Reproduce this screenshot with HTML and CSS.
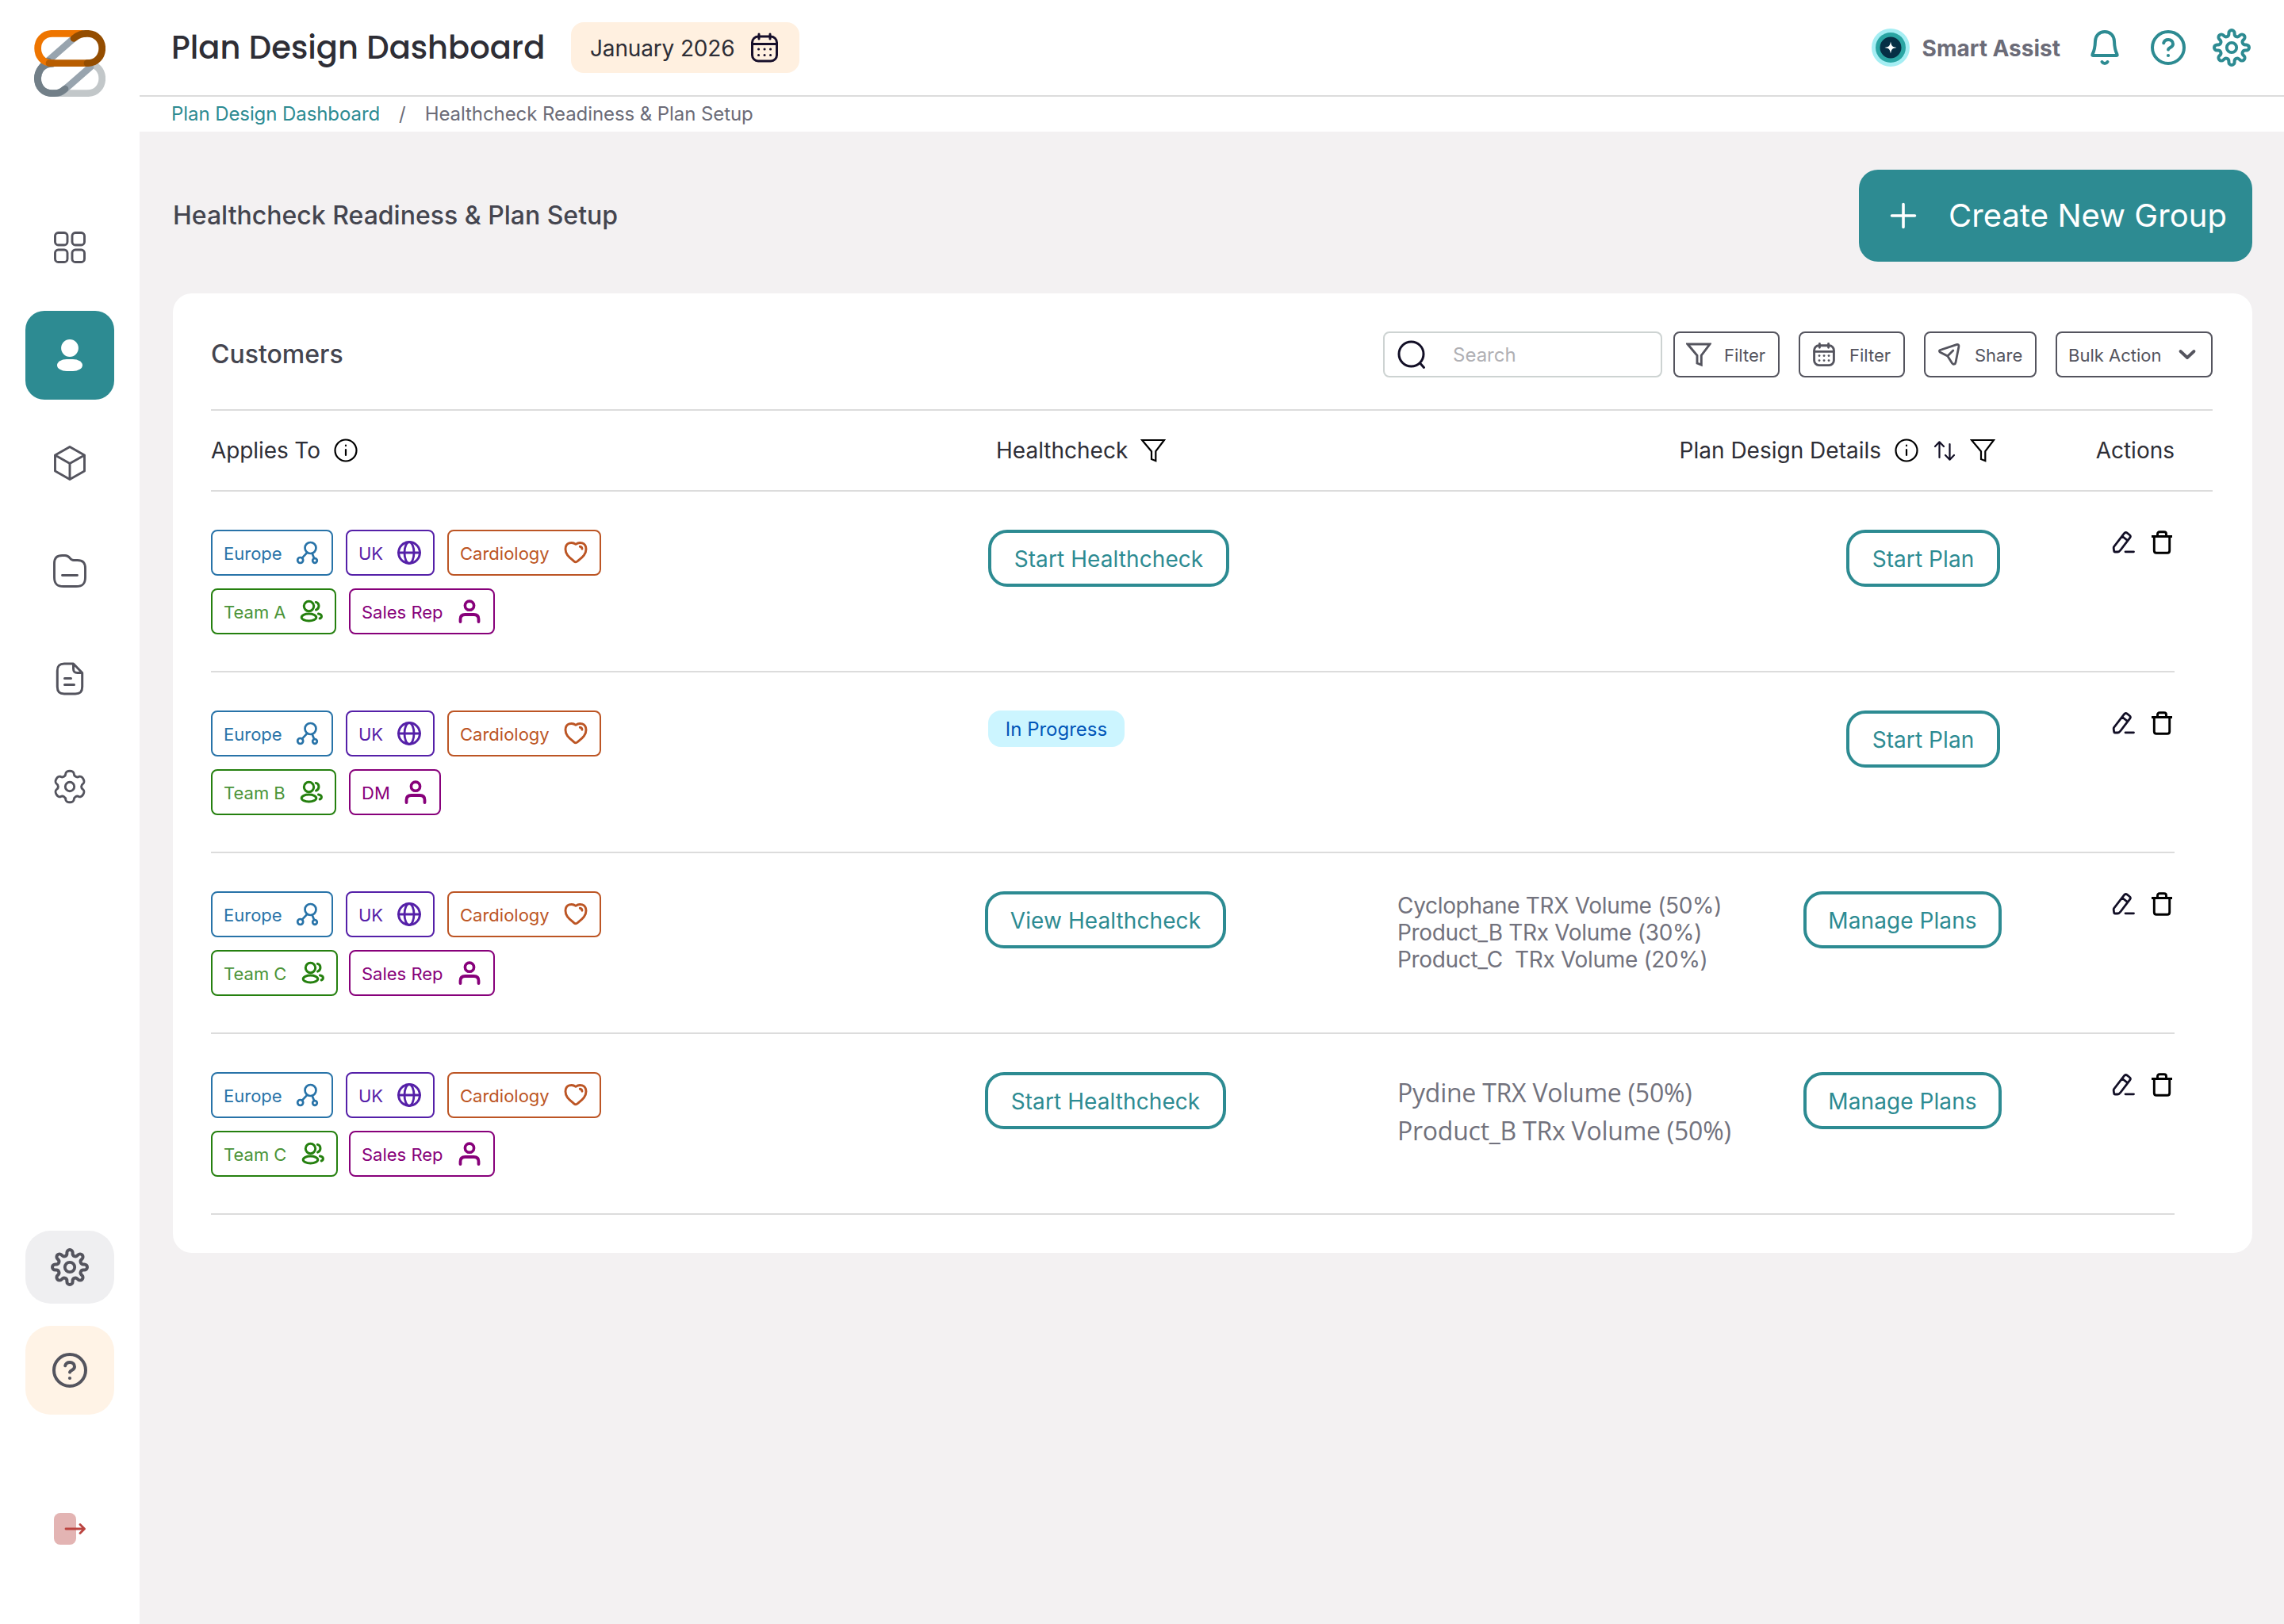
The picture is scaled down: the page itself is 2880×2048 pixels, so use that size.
FILE: index.html
```html
<!DOCTYPE html>
<html lang="en">
<head>
<meta charset="utf-8">
<title>Plan Design Dashboard</title>
<link rel="stylesheet" href="styles.css">
</head>
<body>
<svg class="sprite" aria-hidden="true">
  <symbol id="gear" viewBox="-24 -24 48 48"><path d="M-3.6-17V-18.4A3.6 3.6 0 0 1 3.6-18.4V-17A3.44 3.44 0 0 0 9.48-14.57L10.47-15.56A3.6 3.6 0 0 1 15.56-10.47L14.57-9.48A3.44 3.44 0 0 0 17-3.6H18.4A3.6 3.6 0 0 1 18.4 3.6H17A3.44 3.44 0 0 0 14.57 9.48L15.56 10.47A3.6 3.6 0 0 1 10.47 15.56L9.48 14.57A3.44 3.44 0 0 0 3.6 17V18.4A3.6 3.6 0 0 1-3.6 18.4V17A3.44 3.44 0 0 0-9.48 14.57L-10.47 15.56A3.6 3.6 0 0 1-15.56 10.47L-14.57 9.48A3.44 3.44 0 0 0-17 3.6H-18.4A3.6 3.6 0 0 1-18.4-3.6H-17A3.44 3.44 0 0 0-14.57-9.48L-15.56-10.47A3.6 3.6 0 0 1-10.47-15.56L-9.48-14.57A3.44 3.44 0 0 0-3.6-17Z" stroke-width="4"/><circle r="6.2" stroke-width="3.8"/></symbol>
  <symbol id="help" viewBox="0 0 48 48"><circle cx="24" cy="24" r="20" stroke-width="4"/><path d="M18.2 18.2c.8-3 3.200-4.300 5.900-4.300 3.400 0 5.900 2.300 5.900 5.500 0 4.600-5.300 4.400-6 7.100" stroke-width="4"/><circle cx="24" cy="34" r="2.100" fill="currentColor" stroke="none"/></symbol>
  <symbol id="bell" viewBox="0 0 48 48"><path d="M24 4c7 0 11.800 5 12 12 .2 7.500 1 11.500 3.500 16.500.6 1.300.1 1.500-1 1.500h-29c-1.100 0-1.600-.2-1-1.500C11 27.500 11.800 23.500 12 16 12.200 9 17 4 24 4Z" stroke-width="4"/><path d="M20.500 42c1.500 2.500 5.500 2.500 7 0" stroke-width="4"/></symbol>
  <symbol id="calendar" viewBox="0 0 40 40"><g class="calendar-line"><rect x="4.500" y="6" width="31" height="31" rx="7.500"/><path d="M5 15.500h30M13 3v6M27 3v6"/><path d="M12.500 22h.1M20 22h.1M27.500 22h.1M12.500 29.500h.1M20 29.500h.1M27.500 29.500h.1"/></g></symbol>
  <symbol id="funnel" viewBox="0 0 32 32"><path d="M2 3h28L19.300 17.200v12L14 27v-9.800Z" class="funnel-line"/></symbol>
  <symbol id="info" viewBox="0 0 32 32"><circle cx="16" cy="16" r="13.500" stroke-width="2.200"/><path d="M16 15v7M16 9.700v.4" stroke-width="2.200"/></symbol>
  <symbol id="sort" viewBox="0 0 32 32"><path d="M9.500 25V5.500M4 11l5.500-5.700L15 11M22.500 8v19.500M17 22l5.500 5.700 5.500-5.700" stroke-width="2.200"/></symbol>
  <symbol id="send" viewBox="0 0 32 32"><path d="M4.300 10.500 25 3.700c2.100-.7 3.300.4 2.900 2.500L24 26c-.5 2.600-3 3-4.500 1l-5.700-9L4.500 13.200c-1.500-.9-1.300-2.200-.2-2.700ZM13.800 18l7-7" stroke-width="2.800"/></symbol>
  <symbol id="nodes" viewBox="0 0 32 32"><circle cx="19.500" cy="10" r="7" stroke-width="2.700"/><circle cx="6.700" cy="25.500" r="3.500" stroke-width="2.700"/><circle cx="25" cy="26" r="2.800" stroke-width="2.700"/><path d="m15.500 15.700-6.500 7M21.700 17l2.300 5.800" stroke-width="2.700"/></symbol>
  <symbol id="globe" viewBox="0 0 32 32"><circle cx="16" cy="16" r="13.400" stroke-width="3"/><ellipse cx="16" cy="16" rx="6" ry="13.400" stroke-width="2.800"/><path d="M2.500 16h27" stroke-width="2.800"/></symbol>
  <symbol id="heart" viewBox="0 0 32 32"><path d="M16 5.300C11.500 2 3 3 3 11.500c0 7.500 6 11 10.800 15.300q2.200 2 4.400 0C23 22.500 29 19 29 11.500 29 3 20.500 2 16 5.300Z" stroke-width="2.900"/><path d="M21.300 8.200c1.700.3 2.500 1.300 2.700 3" stroke-width="2.900"/></symbol>
  <symbol id="team" viewBox="0 0 32 32"><circle cx="13.500" cy="9.500" r="6.200" stroke-width="3"/><ellipse cx="13.500" cy="23.500" rx="9.300" ry="4.500" stroke-width="3"/><path d="M22.300 4.400c4.700 1 5 8 .2 9.700M25.500 19c4.500.6 5.200 4.500 1.700 6" stroke-width="3"/></symbol>
  <symbol id="person" viewBox="0 0 32 32"><circle cx="16" cy="8.700" r="5.600" stroke-width="3.600"/><path d="M4.500 29v-3.300c0-4 2.500-5.700 6-5.700h11c3.500 0 6 1.700 6 5.700V29" stroke-width="3.800"/></symbol>
  <symbol id="edit" viewBox="0 0 32 32"><path d="m3.500 21.500 13-16.800c1-1.300 2.500-1.400 3.700-.5l3 2.300c1.300 1 1.400 2.500.5 3.700L12 25.500c-1.200 1.700-2.300 2.500-4 2.500H4.700c-.7 0-1-.2-1-.9l-.5-3.600q-.1-1.200.3-2ZM14.300 8.500l6.500 5.100M18 27.800h10.500" stroke-width="2.800"/></symbol>
  <symbol id="trash" viewBox="0 0 32 32"><path d="M6.300 9v17.500c0 1.800 1 2.800 2.800 2.800h13.800c1.800 0 2.800-1 2.800-2.800V9M3 8.500h26M10.500 8V5.500c0-1.500 1-2.700 2.700-2.700h5.600c1.700 0 2.700 1.200 2.700 2.700V8" stroke-width="2.900" stroke-linecap="butt"/></symbol>
</svg>

<div class="app">
  <aside class="sidebar">
    <svg class="logo" viewBox="0 0 90 84">
      <g fill="none" stroke-width="8.700">
        <path d="M23 42.300C-1.500 42.300-1.500 79.700 23 79.700" stroke="#727f88"/>
        <path d="M23 79.700H67C92 79.700 92 42.300 67 42.300" stroke="#c2c7c9"/>
        <path d="M64 4.300C54 4.300 52 9 47 13L19 37.500C13 42 5 50 4.400 61" stroke="#98a4ae"/>
        <path d="M26 79.700C36 79.700 39 74 43 71L71 46.500" stroke="#98a4ae"/>
        <path d="M4.400 61C4.400 72 12 79.700 23 79.700C32 79.700 35 77.500 39 74" stroke="#727f88"/>
        <path d="M4.400 61C4.400 52 9 46.500 18 39" stroke="#727f88"/>
        <path d="M60 4.300H23C-1.500 4.300-1.500 41.700 23 41.700" stroke="#ee7500"/>
        <path d="M19 41.700H68" stroke="#b85d00"/>
        <path d="M50 10.500C56 5.500 60 4.300 67 4.300C92 4.300 92 41.700 67 41.700" stroke="#944d00"/>
      </g>
    </svg>
    <nav class="nav">
      <a class="nav-item"><svg class="i40" viewBox="0 0 40 40"><g stroke-width="2.900"><rect x="1.500" y="1.500" width="15.500" height="15.500" rx="4"/><rect x="23" y="1.500" width="15.500" height="15.500" rx="4"/><rect x="1.500" y="23" width="15.500" height="15.500" rx="4"/><rect x="23" y="23" width="15.500" height="15.500" rx="4"/></g></svg></a>
      <a class="nav-item active"><svg class="i40" viewBox="0 0 40 40"><g fill="#fff" stroke="none"><circle cx="20" cy="11" r="10.900"/><rect x="4" y="25" width="32" height="15" rx="12" ry="7.500"/></g></svg></a>
      <a class="nav-item"><svg class="i44" viewBox="0 0 44 44"><path d="M22 1.500 40.500 12v20L22 42.500 3.500 32V12ZM3.500 12 22 22.500 40.500 12M22 22.500v20" stroke-width="2.900"/></svg></a>
      <a class="nav-item"><svg class="i44" viewBox="0 0 44 44"><path d="M2.500 12.500c0-7 3-10 10-10h3.500c7 0 5 6 11 6h4.500c7 0 10 3 10 10V30c0 8.500-3.500 11.500-11.500 11.500H14c-8 0-11.500-3-11.500-11.500ZM12.500 27.500h19" stroke-width="2.900"/></svg></a>
      <a class="nav-item"><svg class="i44" viewBox="0 0 44 44"><path d="M26.500 3H15C8.500 3 6.300 6 6.300 12v20c0 6 2.200 9 8.700 9h14c6.500 0 8.700-3 8.700-9V14.500ZM26.500 3v6c0 4 1.200 5.500 5 5.500h6.200M15.500 21.500h8M15.500 29.500h12" stroke-width="3"/></svg></a>
      <a class="nav-item"><svg class="i44" viewBox="-22 -22 44 44"><path d="M-5.200-16.200A5.200 3.500 0 0 1 5.200-16.200A4.200 4.200 0 0 0 11.430-12.600A5.200 3.500 60 0 1 16.630-3.600A4.200 4.200 0 0 0 16.630 3.600A5.200 3.500 120 0 1 11.430 12.600A4.200 4.200 0 0 0 5.200 16.200A5.200 3.500 0 0 1-5.200 16.200A4.200 4.200 0 0 0-11.430 12.600A5.200 3.500 60 0 1-16.630 3.600A4.200 4.200 0 0 0-16.630-3.600A5.200 3.500 120 0 1-11.430-12.600A4.200 4.200 0 0 0-5.200-16.200Z" stroke-width="2.900"/><circle r="5.700" stroke-width="2.900"/></svg></a>
    </nav>
    <div class="nav-bottom">
      <a class="tile tile-gear"><svg class="i48"><use href="#gear"/></svg></a>
      <a class="tile tile-help"><svg class="i48"><use href="#help"/></svg></a>
      <a class="logout"><svg class="i40" viewBox="0 0 40 40"><rect width="28" height="40" rx="8" fill="#e3b4b3" stroke="none"/><path d="M15 20h23M33 14.500l5.500 5.500-5.500 5.500" stroke="#bb4440" stroke-width="2.800"/></svg></a>
    </div>
  </aside>

  <div class="main">
    <header class="topbar">
      <h1 class="t title">Plan Design Dashboard</h1>
      <button class="date"><span class="t">January 2026</span><svg class="i40"><use href="#calendar"/></svg></button>
      <div class="top-right">
        <svg class="assist" viewBox="0 0 48 48"><g stroke="none"><circle cx="24" cy="24" r="24" fill="#a5eef3"/><circle cx="24" cy="24" r="19" fill="#2aa5a3"/><circle cx="24" cy="24" r="13.500" fill="#062f45"/><path d="M24 16.500c1 5.500 2 6.500 7.500 7.500-5.500 1-6.500 2-7.500 7.500-1-5.500-2-6.500-7.500-7.500 5.500-1 6.500-2 7.500-7.500Z" fill="#fff"/></g></svg>
        <span class="t assist-label">Smart Assist</span>
        <svg class="i48"><use href="#bell"/></svg>
        <svg class="i48"><use href="#help"/></svg>
        <svg class="i48"><use href="#gear"/></svg>
      </div>
    </header>
    <div class="crumbs"><a class="t">Plan Design Dashboard</a><span class="t slash">/</span><span class="t">Healthcheck Readiness &amp; Plan Setup</span></div>

    <main class="content">
      <div class="page-head">
        <h2 class="t">Healthcheck Readiness &amp; Plan Setup</h2>
        <button class="create"><svg class="i48" viewBox="0 0 48 48"><path d="M24 9.500v29M9.500 24h29" stroke-width="3.600"/></svg><span class="t">Create New Group</span></button>
      </div>

      <section class="card">
        <div class="toolbar">
          <h3 class="t">Customers</h3>
          <label class="search"><svg class="i40" viewBox="0 0 40 40"><circle cx="19.500" cy="19.500" r="15.500" stroke-width="3"/><path d="m31.500 32 4 4.500" stroke-width="3"/></svg><span class="t">Search</span></label>
          <button class="tool filter"><svg class="i32"><use href="#funnel"/></svg><span class="t">Filter</span></button>
          <button class="tool filter"><svg class="i32"><use href="#calendar"/></svg><span class="t">Filter</span></button>
          <button class="tool share"><svg class="i32"><use href="#send"/></svg><span class="t">Share</span></button>
          <button class="tool bulk"><span class="t">Bulk Action</span><svg class="i32" viewBox="0 0 32 32"><path d="m7.500 12 8.500 8 8.500-8" stroke-width="3.800"/></svg></button>
        </div>

        <div class="grid thead">
          <div class="th"><span class="t applies">Applies To</span><svg class="i32"><use href="#info"/></svg></div>
          <div class="th th-health"><span class="t">Healthcheck</span><svg class="i32"><use href="#funnel"/></svg></div>
          <div class="th th-plan"><span class="t">Plan Design Details</span><svg class="i32"><use href="#info"/></svg><svg class="i32 ink"><use href="#sort"/></svg><svg class="i32"><use href="#funnel"/></svg></div>
          <div class="th th-actions"><span class="t">Actions</span></div>
        </div>

        <div class="grid row">
          <div class="tags">
            <div class="tag-line"><span class="tag europe"><span class="t">Europe</span><svg class="i32"><use href="#nodes"/></svg></span><span class="tag uk"><span class="t">UK</span><svg class="i32"><use href="#globe"/></svg></span><span class="tag cardio"><span class="t">Cardiology</span><svg class="i32"><use href="#heart"/></svg></span></div>
            <div class="tag-line"><span class="slot"><span class="tag team"><span class="t">Team A</span><svg class="i32"><use href="#team"/></svg></span></span><span class="tag role"><span class="t">Sales Rep</span><svg class="i32"><use href="#person"/></svg></span></div>
          </div>
          <div class="health inset"><button class="btn start"><span class="t">Start Healthcheck</span></button></div>
          <div class="plan inset"><button class="btn short"><span class="t">Start Plan</span></button></div>
          <div class="actions"><svg class="i32 ink"><use href="#edit"/></svg><svg class="i32"><use href="#trash"/></svg></div>
        </div>

        <div class="grid row">
          <div class="tags">
            <div class="tag-line"><span class="tag europe"><span class="t">Europe</span><svg class="i32"><use href="#nodes"/></svg></span><span class="tag uk"><span class="t">UK</span><svg class="i32"><use href="#globe"/></svg></span><span class="tag cardio"><span class="t">Cardiology</span><svg class="i32"><use href="#heart"/></svg></span></div>
            <div class="tag-line"><span class="slot"><span class="tag team"><span class="t">Team B</span><svg class="i32"><use href="#team"/></svg></span></span><span class="tag role dm"><span class="t">DM</span><svg class="i32"><use href="#person"/></svg></span></div>
          </div>
          <div class="health inset"><span class="status"><span class="t">In Progress</span></span></div>
          <div class="plan inset"><button class="btn short"><span class="t">Start Plan</span></button></div>
          <div class="actions"><svg class="i32 ink"><use href="#edit"/></svg><svg class="i32"><use href="#trash"/></svg></div>
        </div>

        <div class="grid row">
          <div class="tags">
            <div class="tag-line"><span class="tag europe"><span class="t">Europe</span><svg class="i32"><use href="#nodes"/></svg></span><span class="tag uk"><span class="t">UK</span><svg class="i32"><use href="#globe"/></svg></span><span class="tag cardio"><span class="t">Cardiology</span><svg class="i32"><use href="#heart"/></svg></span></div>
            <div class="tag-line"><span class="slot"><span class="tag team wide"><span class="t">Team C</span><svg class="i32"><use href="#team"/></svg></span></span><span class="tag role"><span class="t">Sales Rep</span><svg class="i32"><use href="#person"/></svg></span></div>
          </div>
          <div class="health"><button class="btn start"><span class="t">View Healthcheck</span></button></div>
          <div class="plan"><div class="details"><span class="t">Cyclophane TRX Volume (50%)</span><span class="t">Product_B TRx Volume (30%)</span><span class="t">Product_C&nbsp; TRx Volume (20%)</span></div><button class="btn manage"><span class="t">Manage Plans</span></button></div>
          <div class="actions"><svg class="i32 ink"><use href="#edit"/></svg><svg class="i32"><use href="#trash"/></svg></div>
        </div>

        <div class="grid row">
          <div class="tags">
            <div class="tag-line"><span class="tag europe"><span class="t">Europe</span><svg class="i32"><use href="#nodes"/></svg></span><span class="tag uk"><span class="t">UK</span><svg class="i32"><use href="#globe"/></svg></span><span class="tag cardio"><span class="t">Cardiology</span><svg class="i32"><use href="#heart"/></svg></span></div>
            <div class="tag-line"><span class="slot"><span class="tag team wide"><span class="t">Team C</span><svg class="i32"><use href="#team"/></svg></span></span><span class="tag role"><span class="t">Sales Rep</span><svg class="i32"><use href="#person"/></svg></span></div>
          </div>
          <div class="health"><button class="btn start"><span class="t">Start Healthcheck</span></button></div>
          <div class="plan"><div class="details large"><span class="t">Pydine TRX Volume (50%)</span><span class="t">Product_B TRx Volume (50%)</span></div><button class="btn manage"><span class="t">Manage Plans</span></button></div>
          <div class="actions"><svg class="i32 ink"><use href="#edit"/></svg><svg class="i32"><use href="#trash"/></svg></div>
        </div>
      </section>
    </main>
  </div>
</div>
</body>
</html>
```

FILE: styles.css
```css
* { box-sizing: border-box; }

body {
  margin: 0;
  background: #f3f1f2;
  font-family: Inter, "Liberation Sans", sans-serif;
  color: #2e2e36;
}

h1, h2, h3 { margin: 0; font-weight: 500; }

button {
  font: inherit;
  color: inherit;
  background: none;
  border: 0;
  padding: 0;
}

svg {
  display: block;
  flex: none;
  fill: none;
  stroke: currentColor;
  stroke-linecap: round;
  stroke-linejoin: round;
}

.t { white-space: nowrap; }
.sprite { position: absolute; width: 0; height: 0; }
.i32 { width: 32px; height: 32px; }
.i40 { width: 40px; height: 40px; }
.i44 { width: 44px; height: 44px; }
.i48 { width: 48px; height: 48px; }
.ink { color: #120f26; }
.funnel-line { stroke-width: var(--funnel-stroke, 2.200px); stroke-linejoin: miter; }
.calendar-line { stroke-width: var(--calendar-stroke, 3px); }

.app { display: flex; height: 2048px; }

/* Sidebar */
.sidebar {
  flex: none;
  width: 176px;
  display: flex;
  flex-direction: column;
  align-items: center;
  padding: 38px 0 100px;
  background: #fff;
  color: #54545e;
}
.logo { width: 90px; height: 84px; }
.nav {
  display: flex;
  flex-direction: column;
  gap: 24px;
  margin-top: 134px;
}
.nav-item {
  width: 112px;
  height: 112px;
  display: flex;
  align-items: center;
  justify-content: center;
  border-radius: 24px;
}
.nav-item.active { background: #2d8b92; }
.nav-bottom {
  margin-top: auto;
  display: flex;
  flex-direction: column;
  align-items: center;
}
.tile {
  width: 112px;
  display: flex;
  align-items: center;
  justify-content: center;
  border-radius: 32px;
}
.tile-gear { height: 92px; background: #efeff1; }
.tile-help { height: 112px; margin-top: 28px; background: #fff3e6; }
.logout { margin-top: 124px; }

/* Header */
.main { flex: 1; min-width: 0; }
.topbar {
  display: flex;
  align-items: center;
  height: 122px;
  padding: 0 42px 0 40px;
  border-bottom: 2px solid #dcdcdc;
  background: #fff;
}
.title {
  width: 504px;
  font-family: Poppins, Inter, sans-serif;
  font-size: 40px;
}
.date {
  display: flex;
  align-items: center;
  justify-content: space-between;
  width: 288px;
  height: 64px;
  padding: 2px 24px 0;
  border-radius: 16px;
  background: #fff0e0;
  font-size: 28px;
  letter-spacing: -0.15px;
}
.date svg { color: #170f2b; margin-top: -2px; }
.top-right {
  margin-left: auto;
  display: flex;
  align-items: center;
  gap: 32px;
  color: #2d8b92;
}
.assist { width: 48px; height: 48px; margin-right: -16px; }
.assist-label { padding-top: 2px; font-size: 28px; font-weight: 700; color: #6c6c78; }

.crumbs {
  display: flex;
  align-items: center;
  gap: 24px;
  height: 44px;
  padding: 0 0 2px 40px;
  background: #fff;
  font-size: 24px;
  letter-spacing: -0.08px;
  color: #6c6c78;
}
.crumbs a { color: #2d8b92; }

/* Page */
.content { padding: 48px 40px 0 42px; }
.page-head {
  display: flex;
  align-items: center;
  justify-content: space-between;
  height: 116px;
}
.page-head h2 { padding-bottom: 2px; font-size: 32px; color: #44454f; }
.create {
  display: flex;
  align-items: center;
  gap: 33px;
  width: 496px;
  height: 116px;
  padding-left: 32px;
  border-radius: 24px;
  background: #2d8b92;
  color: #fff;
  font-size: 40px;
  letter-spacing: 0.05px;
}
.create .t { padding-bottom: 2px; }

.card {
  margin-top: 40px;
  padding: 48px;
  border-radius: 24px;
  background: #fff;
}
.toolbar {
  display: flex;
  align-items: center;
  width: 2524px;
  padding-bottom: 40px;
  border-bottom: 2px solid #dcdcdc;
  color: #54545e;
  font-size: 22px;
}
.toolbar h3 { padding-bottom: 2px; font-size: 32px; color: #44454f; }
.search {
  display: flex;
  align-items: center;
  gap: 32px;
  width: 352px;
  height: 58px;
  margin-left: auto;
  padding-left: 14px;
  border: 2px solid #cdd3d2;
  border-radius: 8px;
  color: #b0b0b4;
  font-size: 24px;
}
.search svg { color: #120f26; }
.tool {
  display: flex;
  align-items: center;
  gap: 16px;
  height: 58px;
  margin-left: 24px;
  padding: 0 14px;
  border: 2px solid #54545e;
  border-radius: 8px;
  --funnel-stroke: 2.900px;
  --calendar-stroke: 3.600px;
}
.tool .t { padding-top: 1px; }
.search + .tool { margin-left: 14px; }
.filter { width: 134px; }
.share { width: 142px; }
.bulk { width: 198px; justify-content: space-between; }

/* Table */
.grid {
  display: grid;
  grid-template-columns: 976px 520px 762px 1fr;
  border-bottom: 2px solid #dcdcdc;
}
.thead { width: 2524px; height: 102px; font-size: 28px; }
.th { display: flex; align-items: center; gap: 16px; }
.th svg { color: #000; }
.th svg.ink { color: #120f26; }
.applies { letter-spacing: -0.1px; }
.th-health { padding-left: 14px; }
.th-plan { justify-content: flex-end; padding-right: 8px; }
.th-actions { justify-content: flex-end; padding-right: 48px; }

.row { width: 2476px; height: 228px; padding-top: 48px; }
.tags { display: flex; flex-direction: column; gap: 16px; }
.tag-line { display: flex; gap: 16px; }
.slot { width: 158px; display: flex; }
.tag {
  display: flex;
  flex: none;
  align-items: center;
  justify-content: space-between;
  height: 58px;
  padding: 0 14px;
  border: 2px solid currentColor;
  border-radius: 8px;
  font-size: 22px;
}
.tag .t { padding-top: 2px; }
.europe { width: 154px; color: #2873a8; }
.uk { width: 112px; color: #5520a8; }
.cardio { width: 194px; color: #bc5524; }
.team { width: 158px; border-color: #25800f; color: #25800f; }
.team.wide { width: 160px; }
.team .t { color: #4b9438; }
.role { width: 184px; color: #87007a; }
.role.dm { width: 116px; }

.health { display: flex; align-items: flex-start; }
.health.inset { padding-left: 4px; }
.plan { display: flex; align-items: flex-start; justify-content: flex-end; }
.plan.inset { padding-right: 2px; }
.btn {
  display: flex;
  align-items: center;
  justify-content: center;
  height: 72px;
  padding-top: 2px;
  border: 4px solid #2d8b92;
  border-radius: 24px;
  color: #2d8b92;
  font-size: 28px;
  letter-spacing: 0.08px;
}
.btn.start { width: 304px; }
.btn.short { width: 194px; }
.btn.manage { width: 250px; }
.status {
  display: flex;
  align-items: center;
  justify-content: center;
  width: 172px;
  height: 46px;
  border-radius: 16px;
  background: #ccf5ff;
  color: #0055b8;
  font-size: 24px;
}
.details {
  display: flex;
  flex-direction: column;
  margin-right: auto;
  padding-top: 1px;
  font-size: 28px;
  line-height: 34px;
  letter-spacing: -0.32px;
  color: #72727d;
}
.details.large {
  padding-top: 2px;
  font-family: "Open Sans", "Noto Sans", sans-serif;
  font-size: 32px;
  line-height: 48px;
  letter-spacing: -0.24px;
}
.actions { display: flex; justify-content: flex-end; gap: 16px; color: #000; }
```
